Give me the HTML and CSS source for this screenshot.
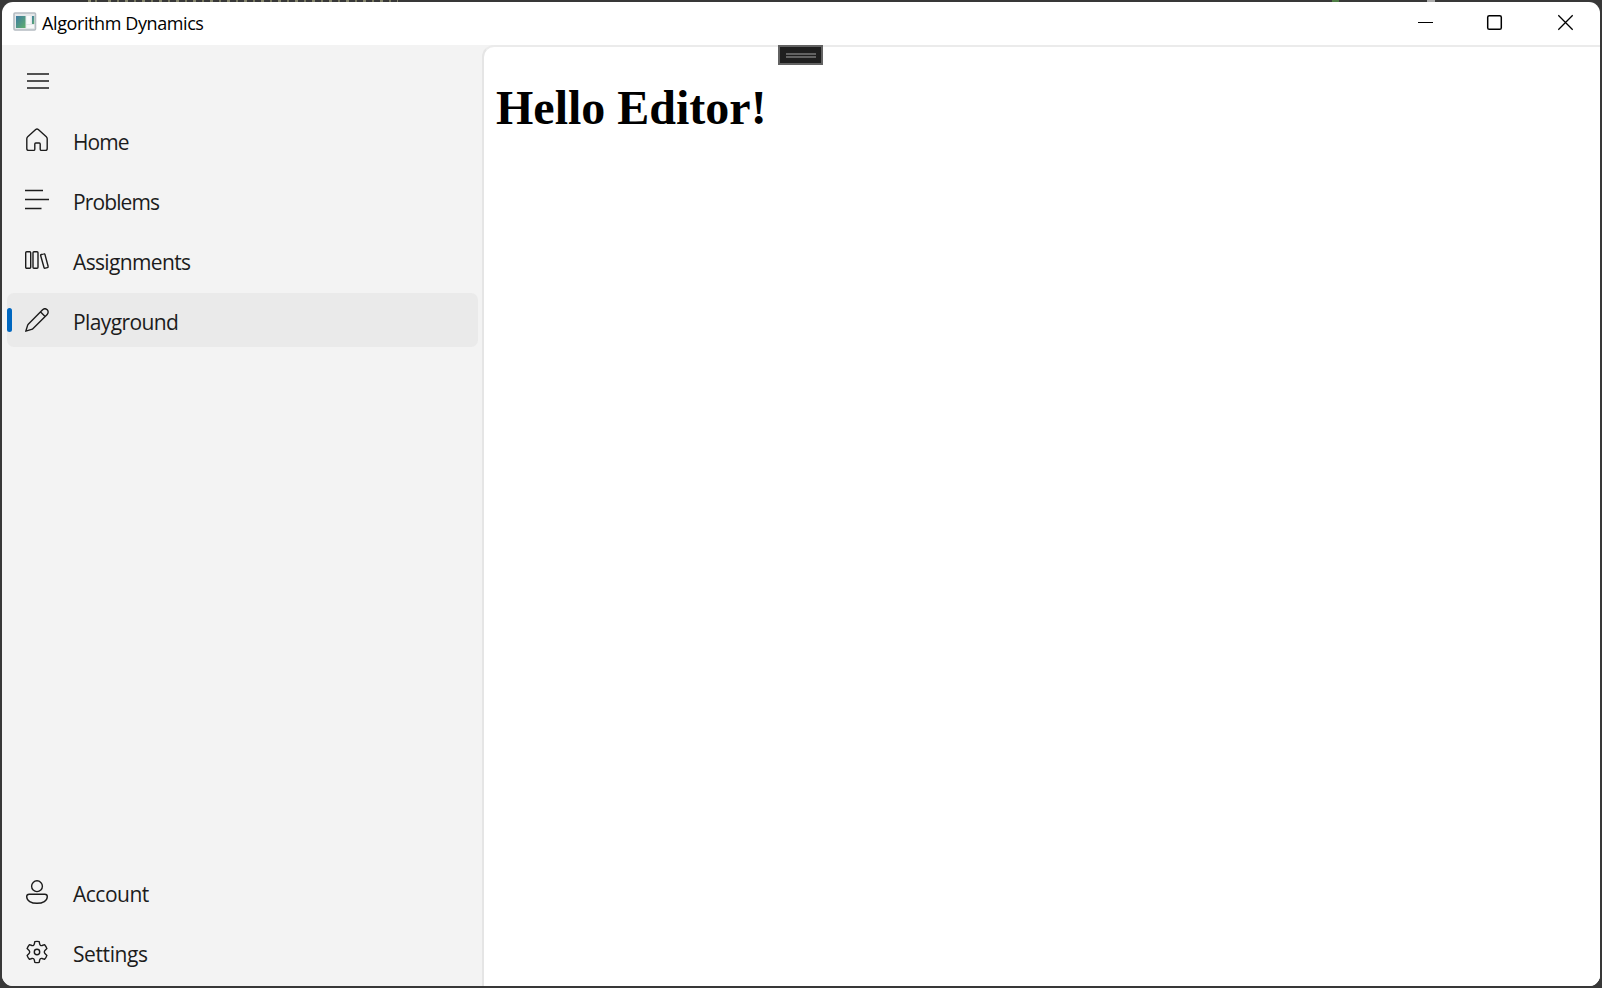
FILE: index.html
```html
<!DOCTYPE html>
<html lang="en">
<head>
<meta charset="utf-8">
<title>Algorithm Dynamics</title>
<link rel="stylesheet" href="styles.css">
</head>
<body>
<div class="window">
  <header class="titlebar">
    <svg class="app-icon" width="24" height="20" viewBox="0 0 24 20">
      <defs><linearGradient id="g" x1="0" y1="0" x2="1" y2="1"><stop offset="0" stop-color="#3d7ba3"/><stop offset="1" stop-color="#62b06c"/></linearGradient></defs>
      <rect x="1" y="1" width="21.500" height="17" rx="1" fill="#e5e8ea" stroke="#b5bcc2" stroke-width="1.6"/>
      <rect x="3" y="4" width="9.500" height="12" fill="url(#g)"/>
      <rect x="13.500" y="4" width="4" height="8" fill="#fafbfb"/><rect x="19" y="4" width="2.200" height="8" fill="url(#g)"/>
      <rect x="13.500" y="13" width="7.500" height="3" fill="#f7f8f8"/>
    </svg>
    <span class="title">Algorithm Dynamics</span>
    <div class="controls">
      <svg width="70" height="43" viewBox="0 0 70 43"><path d="M18 20.5h15" stroke="#000" stroke-width="1.2"/></svg>
      <svg width="70" height="43" viewBox="0 0 70 43"><rect x="17.7" y="13.7" width="13.6" height="13.6" rx="1.6" fill="none" stroke="#000" stroke-width="1.5"/></svg>
      <svg width="60" height="43" viewBox="0 0 60 43"><path d="M18.300 13.300l14.400 14.400M32.700 13.300L18.300 27.700" stroke="#000" stroke-width="1.3"/></svg>
    </div>
  </header>
  <main class="body">
    <nav class="sidebar">
      <button class="menu"><svg class="icon" viewBox="0 0 24 24"><path d="M2 5h22M2 12h22M2 19h22"/></svg></button>
      <a class="item"><svg class="icon" viewBox="0 0 24 24"><path d="M10.700 1.500q1.300-1.100 2.600 0l8 7.300q.9.800.9 2V20.500q0 1.900-1.900 1.900h-3.900q-1.200 0-1.200-1.200V16q0-1-1-1h-3.400q-1 0-1 1v5.200q0 1.200-1.200 1.200H3.700q-1.900 0-1.900-1.900V10.800q0-1.200.9-2z"/></svg><span class="label w-home">Home</span></a>
      <a class="item"><svg class="icon" viewBox="0 0 24 24"><path d="M0 2.500h18M0 11.500h24M0 20.500h16.500"/></svg><span class="label w-problems">Problems</span></a>
      <a class="item"><svg class="icon" viewBox="0 0 24 24"><rect x=".7" y="3.700" width="5" height="16.600" rx="1"/><rect x="8" y="3.700" width="5" height="16.600" rx="1"/><path d="M16.400 6.500l2.300-.6q1-.3 1.300.7l3.100 11.700q.3 1-.7 1.300l-2.100.6q-1 .3-1.300-.7L15.700 7.800q-.3-1 .7-1.300z"/></svg><span class="label w-assign">Assignments</span></a>
      <a class="item selected"><svg class="icon" viewBox="0 0 24 24"><path d="M17.600 1.800a3.200 3.200 0 0 1 4.600 4.600L8.100 20.500q-.6.600-1.500.9L.8 23.200l1.800-5.800q.3-.9.900-1.500zM15.600 3.900l4.500 4.500"/></svg><span class="label w-play">Playground</span></a>
      <div class="spacer"></div>
      <a class="item"><svg class="icon" viewBox="0 0 24 24"><circle cx="12" cy="6.200" r="5.400"/><path d="M4.200 14.300h15.600q2.500 0 2.500 2.500c0 4-4.500 6.500-10.300 6.500S1.700 20.800 1.700 16.800q0-2.500 2.500-2.500z"/></svg><span class="label w-account">Account</span></a>
      <a class="item"><svg class="icon" viewBox="0 0 24 24"><circle cx="12" cy="12" r="2.700"/><path d="M9.800 1.600q2.200-.5 4.400 0l.5 2.500q.5 1.900 2.400 1.400l2.500-.8q1.600 1.700 2.300 3.900l-2 1.800q-1.300 1.600 0 3.200l2 1.800q-.7 2.200-2.300 3.900l-2.500-.8q-1.900-.5-2.400 1.400l-.5 2.500q-2.200.5-4.400 0l-.5-2.500q-.5-1.900-2.400-1.400l-2.500.8q-1.600-1.700-2.300-3.900l2-1.800q1.300-1.600 0-3.200l-2-1.800q.7-2.200 2.300-3.900l2.500.8q1.900.5 2.400-1.400z"/></svg><span class="label w-settings">Settings</span></a>
    </nav>
    <section class="content">
      <h1>Hello Editor!</h1>
      <div class="handle"></div>
    </section>
  </main>
</div>
</body>
</html>
```

FILE: styles.css
```css
*, ::before { box-sizing: border-box; }
body {
  margin: 0; height: 988px; padding: 2px; overflow: hidden;
  font-family: "Open Sans", "Noto Sans", sans-serif;
  background:
    linear-gradient(#aaa, #aaa) 1427px 0 / 8px 2px no-repeat,
    linear-gradient(#4e7d45, #4e7d45) 1332px 0 / 7px 2px no-repeat,
    linear-gradient(90deg, #8b8b70 0 3px, #383838 3px 7px, #77775f 7px 9px, #383838 9px 17px) 88px 0 / 17px 2px no-repeat,
    repeating-linear-gradient(90deg, #85856c 0 3px, #383838 3px 9px, #77775f 9px 11px, #383838 11px 17px) 108px 0 / 290px 2px no-repeat,
    #383838;
}
.window { height: 984px; display: flex; flex-direction: column; overflow: hidden; border-radius: 11px; background: #fff; }
.titlebar { height: 43px; flex: none; display: flex; align-items: flex-start; }
.app-icon { margin: 10px 0 0 11px; }
.title { margin: 8px 0 0 5px; font-size: 18px; line-height: 26px; color: #000; letter-spacing: -.4px; white-space: nowrap; }
.controls { margin-left: auto; display: flex; }
.body { flex: 1; min-height: 0; display: flex; background: #f3f3f3; }
.sidebar { width: 480px; flex: none; padding: 9px 4px 7px 5px; display: flex; flex-direction: column; gap: 6px; }
.menu { height: 53px; border: 0; background: none; padding: 0 0 0 18px; display: flex; align-items: center; }
.icon { width: 24px; height: 24px; flex: none; fill: none; stroke: #1c1c1c; stroke-width: 1.4; stroke-linejoin: round; }
.item { position: relative; height: 54px; flex: none; display: flex; align-items: center; gap: 24px; padding: 0 0 0 18px; border-radius: 7px; color: #1c1c1c; }
.item .icon { margin-top: -1px; }
.label { font-size: 21px; line-height: 30px; padding-top: 4px; white-space: nowrap; }
.w-home { letter-spacing: -.9px; }
.w-problems { letter-spacing: -.88px; }
.w-assign { letter-spacing: -.65px; }
.w-play { letter-spacing: -.6px; }
.w-account { letter-spacing: -.5px; }
.w-settings { letter-spacing: -.4px; }
.selected { background: #eaeaea; }
.selected::before { content: ""; position: absolute; left: 0; top: 15px; width: 5px; height: 24px; border-radius: 3px; background: #0067c0; }
.spacer { flex: 1; }
.content { position: relative; flex: 1; background: #fff; border: solid #e5e5e5; border-width: 2px 0 0 2px; border-top-color: #ebebeb; border-radius: 12px 0 0 0; }
h1 { margin: 33px 0 0 12px; font: bold 48px/56px "Liberation Serif", serif; color: #000; }
.handle { position: absolute; left: 294px; top: -2px; width: 45px; height: 20px; border: 2px solid #626262; background: #1f1f1f; }
.handle::before { content: ""; position: absolute; left: 6px; top: 6px; width: 30px; height: 5px; border: solid #626262; border-width: 2px 0; }
```
